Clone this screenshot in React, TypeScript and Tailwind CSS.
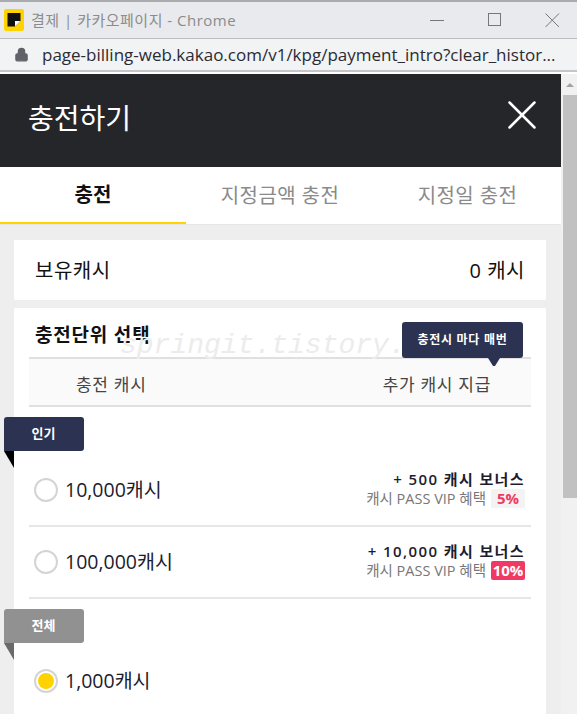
import React from 'react';
import { X, Lock } from 'lucide-react';

const font = "font-['Open_Sans','Noto_Sans_CJK_KR',sans-serif]";

const Flag = ({ label, gray }: { label: string; gray?: boolean }) => (
  <div>
    <div
      className={`flex h-[34px] w-[80px] items-center justify-center rounded-r-[3px] rounded-t-[3px] text-[13px] font-bold text-white ${
        gray ? 'bg-[#919191]' : 'bg-[#2b3252]'
      }`}
    >
      <span className="mr-[1px]">{label}</span>
    </div>
    <svg width="10" height="18" className="block" viewBox="0 0 10 18">
      <path d="M0 0H10V17Z" fill={gray ? '#6a6a6a' : '#000'} />
    </svg>
  </div>
);

const Radio = ({ checked }: { checked?: boolean }) => (
  <span className="flex h-[24px] w-[24px] items-center justify-center rounded-full border-2 border-[#d4d4d4] bg-white">
    {checked && <span className="h-[16px] w-[16px] rounded-full bg-[#ffd200]" />}
  </span>
);

const Row = ({
  amount,
  bonus,
  pct,
  hot,
}: {
  amount: string;
  bonus: string;
  pct: string;
  hot?: boolean;
}) => (
  <div className="flex h-[72px] items-center justify-between border-b-2 border-[#e6e6e6] pl-[5px] pr-[6px]">
    <div className="flex items-center gap-[7px]">
      <Radio />
      <span className="text-[19.5px] leading-[24px] text-[#1c1c2e]">{amount}</span>
    </div>
    <div className="flex flex-col items-end pb-[3px]">
      <span className="text-[15px] font-semibold leading-[19px] tracking-[1.4px] text-[#1c1c2e]">{bonus}</span>
      <div className="flex items-center gap-[5px] text-[14.5px] leading-[19px] text-[#777]">
        <span>캐시 PASS VIP 혜택</span>
        <span
          className={`flex h-[19px] w-[34px] items-center justify-center rounded-[2px] text-[15px] font-bold ${
            hot ? 'bg-[#f03a63] text-white' : 'bg-[#f3f3f3] text-[#f03a63]'
          }`}
        >
          {pct}
        </span>
      </div>
    </div>
  </div>
);

export default function App() {
  return (
    <div className={`flex h-[714px] w-[577px] flex-col overflow-hidden bg-white ${font}`}>
      {/* window title */}
      <div className="flex h-[39px] shrink-0 items-center border-t-2 border-b border-[#a9abae] border-b-[#bcbec2] bg-[#e8eaed] pl-[4px]">
        <svg width="20" height="22" viewBox="0 0 20 22" className="shrink-0">
          <rect width="20" height="22" rx="2" fill="#ffd200" />
          <path d="M3.5 4H16.5V12L11 17.5H3.5Z" fill="#111" />
          <path d="M11 17.5V12H16.5Z" fill="#fff" />
        </svg>
        <span className="ml-[7px] text-[15px] tracking-[0.5px] text-[#8c8c8c]">결제 | 카카오페이지 - Chrome</span>
        <svg width="130" height="16" viewBox="0 0 130 16" className="ml-auto mr-[17px] shrink-0" fill="none" stroke="#777">
          <path d="M0 8.5H14" />
          <rect x="58.5" y="1.5" width="12" height="12" />
          <path d="M115.5 1.5L129 15M129 1.5L115.5 15" />
        </svg>
      </div>
      {/* address bar */}
      <div className="flex h-[33px] shrink-0 items-center border-b-2 border-[#c4c6c9] bg-[#f1f3f4] pl-[14px]">
        <Lock size={15} fill="#5f6368" stroke="#5f6368" strokeWidth={2} className="shrink-0" />
        <span className="ml-[13px] whitespace-nowrap text-[17px] text-[#2b2b33]">
          page-billing-web.kakao.com/v1/kpg/payment_intro?clear_histor...
        </span>
      </div>
      <div className="h-[2px] shrink-0 bg-white" />

      <div className="flex min-h-0 flex-1">
        {/* page */}
        <div className="relative min-w-0 flex-1 overflow-hidden bg-[#eeeeee]">
          <div className="flex h-[93px] items-center justify-between bg-[#25262a] pb-[5px] pl-[28px] pr-[14px]">
            <span className="text-[28px] leading-[34px] text-white">충전하기</span>
            <X size={50} strokeWidth={1.2} className="mb-[6px] text-white" />
          </div>

          <div className="flex h-[58px] items-stretch border-b border-[#e6e6e6] bg-white text-[20px]">
            <div className="flex w-[186px] items-center justify-center border-b-2 border-[#ffd200] font-bold text-[#111]">충전</div>
            <div className="flex w-[188px] items-center justify-center tracking-[0.4px] text-[#8a8a8a]">지정금액 충전</div>
            <div className="flex flex-1 items-center justify-center tracking-[0.4px] text-[#8a8a8a]">지정일 충전</div>
          </div>

          <div className="flex flex-col gap-[8px] pl-[14px] pr-[15px] pt-[15px]">
            <div className="flex h-[60px] items-center justify-between bg-white pl-[21px] pr-[21px] pt-[1px] text-[20px] tracking-[0.5px] text-[#111]">
              <span>보유캐시</span>
              <span>0 캐시</span>
            </div>

            <div className="bg-white px-[15px] pb-[40px]">
              <div className="relative flex h-[51px] items-center border-b-2 border-[#e0e0e0] pl-[6px] pt-[5px]">
                <span className="text-[19px] font-bold tracking-[0.8px] text-[#111]">충전단위 선택</span>
                <span className="absolute left-[91px] top-[19px] whitespace-nowrap font-['Liberation_Mono'] text-[28px] italic leading-[38px] text-[#ececec]">
                  springit.tistory.
                </span>
              </div>
              <div className="relative flex h-[48px] items-center justify-between border-b-2 border-[#e0e0e0] bg-[#fafafa] pl-[47px] pr-[40px] pt-[5px] text-[17px] tracking-[0.7px] text-[#444]">
                <span>충전 캐시</span>
                <span>추가 캐시 지급</span>
                <div className="absolute right-[8px] top-[-37px]">
                  <div className="flex h-[36px] w-[121px] items-center justify-center rounded-[3px] bg-[#2b3252] text-[12px] font-semibold text-white">
                    충전시 마다 매번
                  </div>
                  <svg width="12" height="9" viewBox="0 0 12 9" className="absolute left-[86px] top-[36px]">
                    <path d="M0 0H12L7 8H5Z" fill="#2b3252" />
                  </svg>
                </div>
              </div>

              <div className="pt-[48px]">
                <Row amount="10,000캐시" bonus="+ 500 캐시 보너스" pct="5%" />
                <Row amount="100,000캐시" bonus="+ 10,000 캐시 보너스" pct="10%" hot />
              </div>
              <div className="flex items-center gap-[7px] pl-[5px] pt-[70px]">
                <Radio checked />
                <span className="text-[19.5px] leading-[24px] text-[#1c1c2e]">1,000캐시</span>
              </div>
            </div>
          </div>

          {/* flags sit over the card edge */}
          <div className="absolute left-[4px] top-[343px]">
            <Flag label="인기" />
          </div>
          <div className="absolute left-[4px] top-[535px]">
            <Flag label="전체" gray />
          </div>
        </div>

        {/* scrollbar */}
        <div className="flex w-[16px] shrink-0 flex-col bg-[#f1f1f1] pl-[2px]">
          <div className="flex h-[21px] items-center justify-center">
            <div className="h-0 w-0 border-x-[4px] border-b-[4px] border-x-transparent border-b-[#a3a3a3]" />
          </div>
          <div className="h-[403px] bg-[#c1c1c1]" />
        </div>
      </div>
    </div>
  );
}
